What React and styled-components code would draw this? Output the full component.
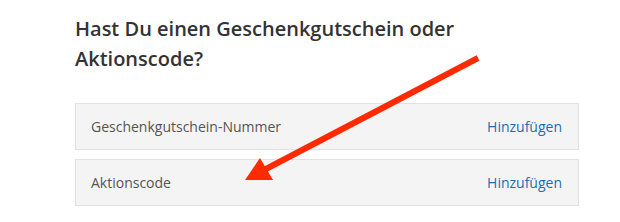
import React from "react";
import styled, { createGlobalStyle } from "styled-components";

const Global = createGlobalStyle`
  html, body { margin: 0; padding: 0; background: #fff; }
  body { font-family: "Open Sans", "Liberation Sans", sans-serif; }
`;

const Page = styled.div`
  position: relative;
  width: 620px;
  height: 222px;
  padding: 14px 41px 0 75px;
  box-sizing: border-box;
`;

const Title = styled.h2`
  margin: 0 0 29px 0;
  font-size: 20px;
  line-height: 30px;
  font-weight: 600;
  color: #333;
  width: 400px;
`;

const List = styled.div`
  display: flex;
  flex-direction: column;
  gap: 9px;
`;

const Row = styled.div`
  display: flex;
  align-items: center;
  justify-content: space-between;
  height: 47px;
  box-sizing: border-box;
  padding: 0 16px 0 15px;
  background: #f4f4f4;
  border: 1px solid #e2e2e2;
`;

const Label = styled.span`
  font-size: 14px;
  color: #555;
`;

const Add = styled.a`
  font-size: 14px;
  color: #1a6db5;
  text-decoration: none;
  cursor: pointer;
`;

const ArrowSvg = styled.svg`
  position: absolute;
  left: 0;
  top: 0;
  pointer-events: none;
`;

export default function App() {
  return (
    <>
      <Global />
      <Page>
        <Title>Hast Du einen Geschenkgutschein oder Aktionscode?</Title>
        <List>
          <Row>
            <Label>Geschenkgutschein-Nummer</Label>
            <Add>Hinzufügen</Add>
          </Row>
          <Row>
            <Label>Aktionscode</Label>
            <Add>Hinzufügen</Add>
          </Row>
        </List>
        <ArrowSvg width="620" height="222" viewBox="0 0 620 222">
          <line x1="478" y1="58" x2="264" y2="170" stroke="#ff2a00" strokeWidth="6" strokeLinecap="butt" />
          <polygon points="260,158 245,180 273,180" fill="#ff2a00" />
        </ArrowSvg>
      </Page>
    </>
  );
}
